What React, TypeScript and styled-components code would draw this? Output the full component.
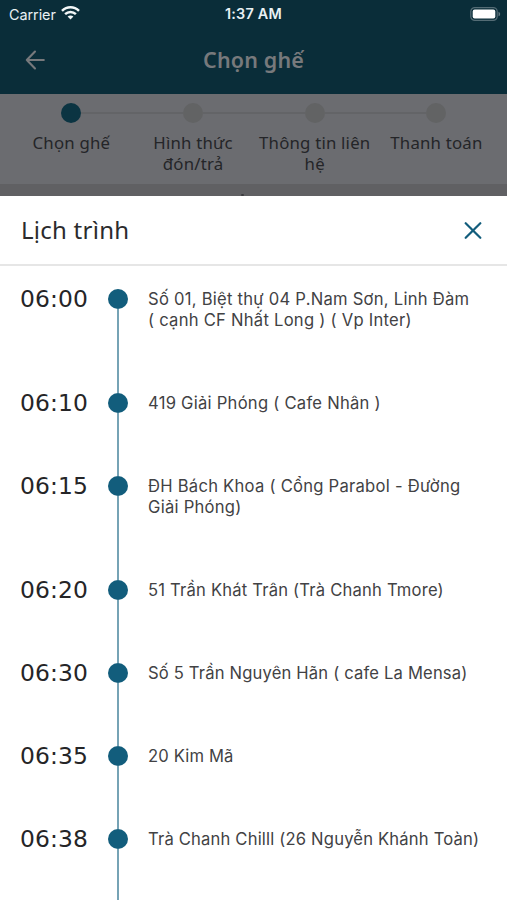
import React from "react";
import styled, { createGlobalStyle } from "styled-components";

const GlobalStyle = createGlobalStyle`
  * { box-sizing: border-box; }
  html, body { margin: 0; padding: 0; }
  body { font-family: Inter, "Noto Sans", sans-serif; background: #fff; }
  h1, h2, p, ol { margin: 0; padding: 0; }
`;

const Screen = styled.main`
  width: 507px;
  height: 900px;
  overflow: hidden;
  display: flex;
  flex-direction: column;
  background: #fff;
`;

const Header = styled.header`
  height: 94px;
  flex: none;
  background: #0a2d39;
`;

const StatusBar = styled.div`
  height: 28px;
  display: grid;
  grid-template-columns: 1fr auto 1fr;
  align-items: center;
  padding: 0 6px 0 9px;
  color: #e9f1f4;
  font-size: 14.4px;
`;

const Carrier = styled.div`
  display: flex;
  align-items: center;
  gap: 5px;
  letter-spacing: -0.05px;
  svg { margin-top: -2px; }
`;

const Clock = styled.time`
  font-weight: 600;
  font-size: 14.4px;
  line-height: 18px;
  margin: -1px 3px 0 0;
  letter-spacing: 0.25px;
`;

const BatterySlot = styled.div`
  display: flex;
  justify-content: flex-end;
  padding-bottom: 1px;
`;

const NavBar = styled.div`
  height: 64px;
  display: grid;
  grid-template-columns: 60px 1fr 60px;
  align-items: center;
`;

const IconButton = styled.button<{ $inset: string }>`
  border: 0;
  background: none;
  display: flex;
  padding: ${(p) => p.$inset};
`;

const NavTitle = styled.h1`
  text-align: center;
  color: #77797c;
  font: 600 21.5px/30px "Noto Sans", sans-serif;
  letter-spacing: 0.15px;
  padding-bottom: 1px;
`;

const Steps = styled.ol`
  height: 90px;
  flex: none;
  display: grid;
  grid-template-columns: repeat(4, 121.7px);
  padding: 9px 10.5px 0;
  list-style: none;
  background: #6b6c70;
`;

const Step = styled.li`
  display: flex;
  flex-direction: column;
  align-items: center;
  gap: 9px;
`;

const StepTrack = styled.div<{ $first?: boolean; $last?: boolean }>`
  width: 100%;
  display: grid;
  grid-template-columns: 1fr 20px 1fr;
  align-items: center;
  &::before, &::after { content: ""; height: 2px; background: #636467; }
  &::before { visibility: ${(p) => (p.$first ? "hidden" : "visible")}; }
  &::after { visibility: ${(p) => (p.$last ? "hidden" : "visible")}; }
`;

const StepDot = styled.span<{ $active?: boolean }>`
  grid-column: 2;
  width: 20px;
  height: 20px;
  border-radius: 50%;
  background: ${(p) => (p.$active ? "#0b3442" : "#626364")};
`;

const StepLabel = styled.span`
  text-align: center;
  white-space: pre-line;
  color: #242528;
  font: 400 16.8px/21px "Noto Sans", sans-serif;
  letter-spacing: 0.2px;
`;

const Backdrop = styled.div`
  height: 12px;
  flex: none;
  background: #606063;
  display: flex;
  align-items: flex-end;
  padding-left: 241px;
  &::after { content: ""; width: 3px; height: 2px; background: #3c3c3f; border-radius: 1px; }
`;

const Sheet = styled.section`
  flex: 1;
  min-height: 0;
  display: flex;
  flex-direction: column;
  background: #fff;
`;

const SheetHeader = styled.div`
  height: 70px;
  flex: none;
  display: flex;
  justify-content: space-between;
  align-items: center;
  padding: 0 25px 0 21px;
  border-bottom: 2px solid #e6e6e6;
`;

const SheetTitle = styled.h2`
  color: #2b2b2d;
  font: 400 24px/32px "Noto Sans", sans-serif;
  letter-spacing: 0.25px;
  padding-bottom: 1px;
`;

const Timeline = styled.ol`
  list-style: none;
  padding-top: 23px;
  flex: 1;
  min-height: 0;
  overflow: hidden;
`;

const Stop = styled.li`
  display: grid;
  grid-template-columns: 108px 20px 1fr;
`;

const StopTime = styled.time`
  padding-left: 20px;
  color: #252527;
  font: 400 23.4px/20px "DejaVu Sans", sans-serif;
  letter-spacing: 0.1px;
`;

const Rail = styled.div`
  display: flex;
  flex-direction: column;
  align-items: center;
  &::before {
    content: "";
    width: 20px;
    height: 20px;
    flex: none;
    border-radius: 50%;
    background: #125d7c;
  }
  &::after { content: ""; width: 2px; flex: 1; background: #76a3b5; }
`;

const Place = styled.p<{ $spacing: number }>`
  padding: 0 0 62px 20px;
  white-space: pre-line;
  color: #424244;
  font-size: 16.6px;
  line-height: 21px;
  letter-spacing: ${(p) => p.$spacing}px;
`;

const stops = [
  { time: "06:00", place: "Số 01, Biệt thự 04 P.Nam Sơn, Linh Đàm\n( cạnh CF Nhất Long ) ( Vp Inter)", spacing: 0.25 },
  { time: "06:10", place: "419 Giải Phóng ( Cafe Nhân )", spacing: 0.25 },
  { time: "06:15", place: "ĐH Bách Khoa ( Cổng Parabol - Đường\nGiải Phóng)", spacing: 0.25 },
  { time: "06:20", place: "51 Trần Khát Trân (Trà Chanh Tmore)", spacing: 0.2 },
  { time: "06:30", place: "Số 5 Trần Nguyên Hãn ( cafe La Mensa)", spacing: 0.17 },
  { time: "06:35", place: "20 Kim Mã", spacing: 0.15 },
  { time: "06:38", place: "Trà Chanh Chilll (26 Nguyễn Khánh Toàn)", spacing: 0.18 },
];

const steps = ["Chọn ghế", "Hình thức\nđón/trả", "Thông tin liên\nhệ", "Thanh toán"];

const WifiIcon = () => (
  <svg width="19" height="14" viewBox="0 0 19 14" fill="none" stroke="#f3f7f8" strokeWidth="2.5">
    <path d="M1 4.9C5.9.1 13.1.1 18 4.9" />
    <path d="M4.1 8.2c3.1-3 7.7-3 10.8 0" />
    <path d="M6.6 10.6c1.7-1.6 4.1-1.6 5.8 0L9.5 13.6z" fill="#f3f7f8" stroke="none" />
  </svg>
);

const BatteryIcon = () => (
  <svg width="31" height="14" viewBox="0 0 31 14">
    <rect x="0.8" y="0.6" width="26.4" height="12.8" rx="4" fill="none" stroke="#546c75" strokeWidth="1.2" />
    <rect x="2.7" y="2.5" width="22.6" height="9" rx="2" fill="#fff" />
    <path d="M28.5 4.7c2.2.8 2.2 3.8 0 4.6z" fill="#647a82" />
  </svg>
);

const BackIcon = () => (
  <svg width="20" height="20" viewBox="0 0 20 20" fill="none" stroke="#77797c" strokeWidth="2.1" strokeLinecap="round" strokeLinejoin="round">
    <path d="M18.8 10H1.8M10 1.5L1.8 10l8.2 8.5" />
  </svg>
);

const CloseIcon = () => (
  <svg width="18" height="18" viewBox="0 0 18 18" fill="none" stroke="#125d7c" strokeWidth="2.2" strokeLinecap="round">
    <path d="M1.7 2.2l14.6 14.6M16.3 2.2L1.7 16.8" />
  </svg>
);

export default function App() {
  return (
    <Screen>
      <GlobalStyle />
      <Header>
        <StatusBar>
          <Carrier>Carrier<WifiIcon /></Carrier>
          <Clock>1:37 AM</Clock>
          <BatterySlot><BatteryIcon /></BatterySlot>
        </StatusBar>
        <NavBar>
          <IconButton $inset="0 0 0 25px" aria-label="Quay lại"><BackIcon /></IconButton>
          <NavTitle>Chọn ghế</NavTitle>
        </NavBar>
      </Header>
      <Steps>
        {steps.map((label, i) => (
          <Step key={label}>
            <StepTrack $first={i === 0} $last={i === steps.length - 1}>
              <StepDot $active={i === 0} />
            </StepTrack>
            <StepLabel>{label}</StepLabel>
          </Step>
        ))}
      </Steps>
      <Backdrop />
      <Sheet>
        <SheetHeader>
          <SheetTitle>Lịch trình</SheetTitle>
          <IconButton $inset="0" aria-label="Đóng"><CloseIcon /></IconButton>
        </SheetHeader>
        <Timeline>
          {stops.map((stop) => (
            <Stop key={stop.time}>
              <StopTime>{stop.time}</StopTime>
              <Rail />
              <Place $spacing={stop.spacing}>{stop.place}</Place>
            </Stop>
          ))}
        </Timeline>
      </Sheet>
    </Screen>
  );
}
